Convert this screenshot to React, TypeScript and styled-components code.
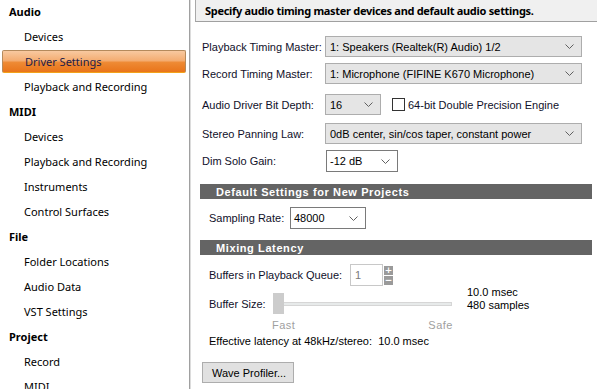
import React from "react";
import styled, { createGlobalStyle } from "styled-components";

const Global = createGlobalStyle`
  html, body { margin: 0; padding: 0; background: #ffffff; }
  body { width: 597px; height: 389px; overflow: hidden; }
  #root { width: 597px; height: 389px; }
`;

const Frame = styled.div`
  display: flex;
  width: 597px;
  height: 389px;
  overflow: hidden;
  background: #fff;
`;

const Sidebar = styled.div`
  width: 189px;
  flex: none;
  border-right: 1px solid #a0a0a0;
  box-shadow: 1px 0 0 #dcdcdc;
  display: flex;
  flex-direction: column;
  margin-top: -1px;
  font-family: "Noto Sans", "DejaVu Sans", sans-serif;
  font-size: 11px;
  color: #000;
`;

const NavItem = styled.div<{ $group?: boolean; $active?: boolean }>`
  height: 25px;
  flex: none;
  box-sizing: border-box;
  display: flex;
  align-items: center;
  padding-left: ${(p) => (p.$group ? 9 : 24)}px;
  font-weight: ${(p) => (p.$group ? 700 : 400)};
  ${(p) =>
    p.$active
      ? `
    margin: 1px 3px 1px 2px;
    padding-left: 22px;
    height: 23px;
    color: #1c1c4a;
    border: 1px solid #b58a5c;
    border-bottom-color: #f2a21a;
    border-radius: 2px;
    background: linear-gradient(#f8c9a0 0%, #f4ad72 45%, #ee8a34 55%, #e9741a 100%);
  `
      : ""}
`;

const Main = styled.div`
  flex: 1;
  min-width: 0;
  display: flex;
  flex-direction: column;
  padding-left: 1px;
  font-family: "Liberation Sans", Arial, sans-serif;
  font-size: 11px;
  color: #10102a;
`;

const Header = styled.div`
  margin-left: 4px;
  height: 22px;
  box-sizing: border-box;
  background: #f0f0f0;
  border-left: 1px solid #a8a8a8;
  border-bottom: 1px solid #a0a0a0;
  display: flex;
  align-items: center;
  padding-left: 9px;
  font-family: "Noto Sans", "DejaVu Sans", sans-serif;
  font-weight: 700;
  font-size: 11px;
  letter-spacing: -0.3px;
  color: #000;
`;

const Row = styled.div<{ $mt: number; $indent?: number }>`
  display: flex;
  align-items: center;
  margin-top: ${(p) => p.$mt}px;
  padding-left: ${(p) => p.$indent ?? 11}px;
`;

const Label = styled.div<{ $w: number }>`
  width: ${(p) => p.$w}px;
  flex: none;
  white-space: nowrap;
`;

const Select = styled.div<{ $w: number; $white?: boolean }>`
  width: ${(p) => p.$w}px;
  height: ${(p) => (p.$white ? 22 : 21)}px;
  box-sizing: border-box;
  flex: none;
  display: flex;
  align-items: center;
  justify-content: space-between;
  padding: 0 7px 0 ${(p) => (p.$white ? 3 : 4)}px;
  background: ${(p) => (p.$white ? "#ffffff" : "#e5e5e5")};
  border: 1px solid ${(p) => (p.$white ? "#7a7a7a" : "#adadad")};
  color: #000;
  white-space: nowrap;
`;

const Chevron = () => (
  <svg width="9" height="5" viewBox="0 0 9 5">
    <polyline points="0.5,0.5 4.5,4.5 8.5,0.5" fill="none" stroke="#606060" strokeWidth="1" />
  </svg>
);

const CheckWrap = styled.div`
  display: flex;
  align-items: center;
  margin-left: 11px;
  gap: 3px;
  white-space: nowrap;
`;

const CheckBox = styled.div`
  width: 13px;
  height: 13px;
  box-sizing: border-box;
  border: 1px solid #333;
  background: #fff;
`;

const SectionBar = styled.div<{ $mt: number }>`
  margin: ${(p) => p.$mt}px 5px 0 9px;
  height: 15px;
  background: #646464;
  color: #fff;
  font-family: "Liberation Sans", Arial, sans-serif;
  font-weight: 700;
  font-size: 11px;
  letter-spacing: 0.6px;
  display: flex;
  align-items: center;
  padding-left: 16px;
`;

const SpinBox = styled.div`
  width: 33px;
  height: 22px;
  box-sizing: border-box;
  border: 1px solid #c8c8c8;
  background: #fff;
  color: #7a7a7a;
  display: flex;
  align-items: center;
  padding-left: 4px;
`;

const SpinButtons = styled.div`
  display: flex;
  flex-direction: column;
  gap: 1px;
  margin-left: 1px;
  height: 22px;
  justify-content: center;
`;

const SpinBtn = styled.div`
  width: 9px;
  height: 9px;
  background: #9a9a9a;
  color: #fff;
  font-size: 9px;
  line-height: 9px;
  font-weight: 700;
  text-align: center;
  font-family: "DejaVu Sans", sans-serif;
`;

const SliderArea = styled.div`
  display: flex;
  align-items: center;
`;

const Track = styled.div`
  width: 170px;
  height: 4px;
  box-sizing: border-box;
  background: #e7eaea;
  border: 1px solid #d6d6d6;
`;

const Thumb = styled.div`
  width: 11px;
  height: 21px;
  background: #cccccc;
  flex: none;
  margin-right: -2px;
  position: relative;
  z-index: 1;
`;

const SliderValues = styled.div`
  margin-left: 15px;
  display: flex;
  flex-direction: column;
  line-height: 13px;
  margin-top: -10px;
  color: #000;
`;

const Ticks = styled.div`
  display: flex;
  justify-content: space-between;
  width: 181px;
  margin-left: 81px;
  margin-top: 5px;
  color: #a0a0a0;
  letter-spacing: 0.5px;
`;

const Note = styled.div`
  margin-top: 4px;
  padding-left: 18px;
  color: #000;
  white-space: pre;
`;

const Button = styled.div`
  margin: 15px 0 0 11px;
  width: 92px;
  height: 21px;
  box-sizing: border-box;
  background: #e1e1e1;
  border: 1px solid #adadad;
  display: flex;
  align-items: center;
  padding-left: 9px;
  color: #000;
`;

const nav: { t: string; g?: boolean; a?: boolean }[] = [
  { t: "Audio", g: true },
  { t: "Devices" },
  { t: "Driver Settings", a: true },
  { t: "Playback and Recording" },
  { t: "MIDI", g: true },
  { t: "Devices" },
  { t: "Playback and Recording" },
  { t: "Instruments" },
  { t: "Control Surfaces" },
  { t: "File", g: true },
  { t: "Folder Locations" },
  { t: "Audio Data" },
  { t: "VST Settings" },
  { t: "Project", g: true },
  { t: "Record" },
  { t: "MIDI" },
];

export default function App() {
  return (
    <>
      <Global />
      <Frame>
        <Sidebar>
          {nav.map((n, i) => (
            <NavItem key={i} $group={n.g} $active={n.a}>
              {n.t}
            </NavItem>
          ))}
        </Sidebar>
        <Main>
          <Header>Specify audio timing master devices and default audio settings.</Header>
          <Row $mt={14}>
            <Label $w={123}>Playback Timing Master:</Label>
            <Select $w={257}>
              <span>1: Speakers (Realtek(R) Audio) 1/2</span>
              <Chevron />
            </Select>
          </Row>
          <Row $mt={6}>
            <Label $w={123}>Record Timing Master:</Label>
            <Select $w={257}>
              <span>1: Microphone (FIFINE K670 Microphone)</span>
              <Chevron />
            </Select>
          </Row>
          <Row $mt={10}>
            <Label $w={123}>Audio Driver Bit Depth:</Label>
            <Select $w={56}>
              <span>16</span>
              <Chevron />
            </Select>
            <CheckWrap>
              <CheckBox />
              <span>64-bit Double Precision Engine</span>
            </CheckWrap>
          </Row>
          <Row $mt={8}>
            <Label $w={123}>Stereo Panning Law:</Label>
            <Select $w={257}>
              <span>0dB center, sin/cos taper, constant power</span>
              <Chevron />
            </Select>
          </Row>
          <Row $mt={6}>
            <Label $w={124}>Dim Solo Gain:</Label>
            <Select $w={72} $white>
              <span>-12 dB</span>
              <Chevron />
            </Select>
          </Row>
          <SectionBar $mt={12}>Default Settings for New Projects</SectionBar>
          <Row $mt={8} $indent={18}>
            <Label $w={81}>Sampling Rate:</Label>
            <Select $w={76} $white>
              <span>48000</span>
              <Chevron />
            </Select>
          </Row>
          <SectionBar $mt={11}>Mixing Latency</SectionBar>
          <Row $mt={9} $indent={18}>
            <Label $w={141}>Buffers in Playback Queue:</Label>
            <SpinBox>1</SpinBox>
            <SpinButtons>
              <SpinBtn>+</SpinBtn>
              <SpinBtn>−</SpinBtn>
            </SpinButtons>
          </Row>
          <Row $mt={7} $indent={18}>
            <Label $w={64}>Buffer Size:</Label>
            <SliderArea>
              <Thumb />
              <Track />
            </SliderArea>
            <SliderValues>
              <span>10.0 msec</span>
              <span>480 samples</span>
            </SliderValues>
          </Row>
          <Ticks>
            <span>Fast</span>
            <span>Safe</span>
          </Ticks>
          <Note>{"Effective latency at 48kHz/stereo:  10.0 msec"}</Note>
          <Button>Wave Profiler...</Button>
        </Main>
      </Frame>
    </>
  );
}
